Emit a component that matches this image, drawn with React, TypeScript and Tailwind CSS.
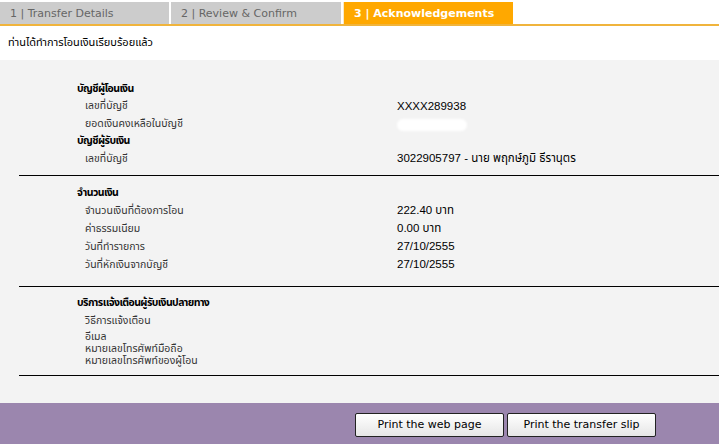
import React from 'react';

const thai = { fontFamily: '"DejaVu Sans", "Noto Sans Thai", "Noto Sans", sans-serif' };

const Row: React.FC<{ label: string; value?: React.ReactNode; h?: string }> = ({ label, value, h = 'h-[18px]' }) => (
    <div className={`flex items-center pl-[85px] ${h}`}>
        <div className="w-[312px] text-[10.5px] text-[#333]">{label}</div>
        <div className="text-[11.5px] text-black" style={{ fontFamily: '"Liberation Sans", "Noto Sans Thai", sans-serif' }}>{value}</div>
    </div>
);

const Heading: React.FC<{ children: React.ReactNode; h?: string }> = ({ children, h = 'h-[18px]' }) => (
    <div className={`flex items-center pl-[77px] text-[10.5px] font-bold tracking-[-0.6px] text-black ${h}`}>{children}</div>
);

const App: React.FC = () => {
    return (
        <div className="w-[719px] h-[444px] bg-white flex flex-col overflow-hidden" style={thai}>
            {/* Steps */}
            <div className="flex pt-[2px] border-b-2 border-[#f0b43c]">
                <div className="w-[169px] h-[22px] bg-[#cccccc] text-[#666] text-[11px] pl-[10px] pt-[2px] flex items-center">1 | Transfer Details</div>
                <div className="w-[170px] h-[22px] bg-[#cccccc] text-[#666] text-[11px] pl-[10px] pt-[2px] flex items-center ml-[2px]">2 | Review &amp; Confirm</div>
                <div className="w-[170px] h-[22px] bg-[#ffa800] text-white font-bold text-[11px] pl-[10px] pt-[2px] flex items-center ml-[2px] border-l border-[#f7e9c8]">3 | Acknowledgements</div>
            </div>

            <div className="h-[34px] flex items-center pl-[8px] text-[11px] text-black">ท่านได้ทำการโอนเงินเรียบร้อยแล้ว</div>

            {/* Summary */}
            <div className="flex-1 bg-[#f3f3f3] pt-[20px]">
                <Heading h="h-[17.5px]">บัญชีผู้โอนเงิน</Heading>
                <Row h="h-[17.5px]" label="เลขที่บัญชี" value="XXXX289938" />
                <Row
                    h="h-[17.5px]"
                    label="ยอดเงินคงเหลือในบัญชี"
                    value={<div className="w-[70px] h-[12px] bg-white rounded-full blur-[1px] mt-[2px]" />}
                />
                <Heading h="h-[17.5px]">บัญชีผู้รับเงิน</Heading>
                <Row h="h-[17.5px]" label="เลขที่บัญชี" value="3022905797 - นาย พฤกษ์ภูมิ ธีรานุตร" />

                <div className="ml-[19px] mt-[7px] border-t border-black" />

                <div className="pt-[8px] pb-[12px]">
                    <Heading>จำนวนเงิน</Heading>
                    <Row label="จำนวนเงินที่ต้องการโอน" value="222.40 บาท" />
                    <Row label="ค่าธรรมเนียม" value="0.00  บาท" />
                    <Row label="วันที่ทำรายการ" value="27/10/2555" />
                    <Row label="วันที่หักเงินจากบัญชี" value="27/10/2555" />
                </div>

                <div className="ml-[19px] border-t border-black" />

                <div className="pt-[7px] pb-[8px]">
                    <Heading>บริการแจ้งเตือนผู้รับเงินปลายทาง</Heading>
                    <Row label="วิธีการแจ้งเตือน" />
                    <div className="pt-[1px]">
                        <Row h="h-[12px]" label="อีเมล" />
                        <Row h="h-[12px]" label="หมายเลขโทรศัพท์มือถือ" />
                        <Row h="h-[12px]" label="หมายเลขโทรศัพท์ของผู้โอน" />
                    </div>
                </div>

                <div className="ml-[19px] border-t border-black" />
            </div>

            {/* Footer */}
            <div className="h-[41px] bg-[#9b86ae] flex items-start justify-end pr-[63px] pt-[10px] gap-[3px]">
                <button className="w-[149px] h-[24px] rounded-[2px] border border-[#222] bg-gradient-to-b from-white to-[#e6e6e6] text-[11px] text-black">Print the web page</button>
                <button className="w-[149px] h-[24px] rounded-[2px] border border-[#222] bg-gradient-to-b from-white to-[#e6e6e6] text-[11px] text-black">Print the transfer slip</button>
            </div>
        </div>
    );
};

export default App;
